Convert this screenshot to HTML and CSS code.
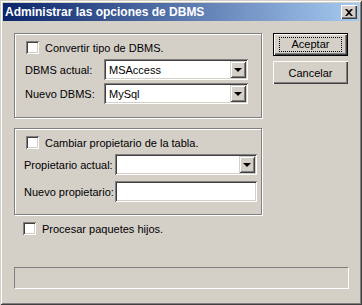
FILE: index.html
```html
<!DOCTYPE html>
<html lang="es">
<head>
<meta charset="UTF-8">
<title>Administrar las opciones de DBMS</title>
<link rel="stylesheet" href="styles.css">
</head>
<body>
<div class="window">
  <div class="titlebar">
    <span class="title">Administrar las opciones de DBMS</span>
    <span class="close"><svg width="8" height="7" viewBox="0 0 8 7"><path d="M0 0h2l2 2 2-2h2L5 3.5 8 7H6L4 5 2 7H0l3-3.5z" fill="#000"/></svg></span>
  </div>

  <div class="content">
    <div class="main">
      <div class="groups">
        <!-- DBMS -->
        <div class="group group-dbms">
          <label class="check"><span class="box"></span>Convertir tipo de DBMS.</label>
          <div class="field">
            <span class="label lbl-dbms">DBMS actual:</span>
            <div class="combo combo-dbms"><span class="value">MSAccess</span><span class="drop"></span></div>
          </div>
          <div class="field">
            <span class="label lbl-dbms">Nuevo DBMS:</span>
            <div class="combo combo-dbms"><span class="value">MySql</span><span class="drop"></span></div>
          </div>
        </div>

        <!-- Owner -->
        <div class="group group-owner">
          <label class="check"><span class="box"></span>Cambiar propietario de la tabla.</label>
          <div class="field">
            <span class="label lbl-owner">Propietario actual:</span>
            <div class="combo combo-owner"><span class="value"></span><span class="drop"></span></div>
          </div>
          <div class="field">
            <span class="label lbl-owner">Nuevo propietario:</span>
            <div class="edit"></div>
          </div>
        </div>

        <label class="check check-child"><span class="box"></span>Procesar paquetes hijos.</label>
      </div>

      <div class="buttons">
        <button type="button" class="btn default"><span class="focus">Aceptar</span></button>
        <button type="button" class="btn">Cancelar</button>
      </div>
    </div>

    <div class="status"></div>
  </div>
</div>
</body>
</html>
```

FILE: styles.css
```css
body {
  margin: 0;
  padding: 0;
  background: #d4d0c8;
  font-family: "Liberation Sans", Arial, sans-serif;
  font-size: 11px;
  color: #000;
}
.window {
  width: 362px;
  height: 305px;
  box-sizing: border-box;
  padding: 3px;
  background: #d4d0c8;
  box-shadow: inset 1px 1px 0 #d4d0c8, inset -1px -1px 0 #404040,
              inset 2px 2px 0 #fff, inset -2px -2px 0 #808080;
}
.titlebar {
  height: 18px;
  display: flex;
  align-items: center;
  justify-content: space-between;
  padding: 0 2px 0 2px;
  background: linear-gradient(to right, #0a246a, #a6caf0);
}
.title {
  color: #fff;
  font-weight: bold;
  font-size: 12px;
}
.close {
  width: 16px;
  height: 14px;
  box-sizing: border-box;
  display: flex;
  align-items: center;
  justify-content: center;
  background: #d4d0c8;
  box-shadow: inset 1px 1px 0 #fff, inset -1px -1px 0 #404040,
              inset -2px -2px 0 #808080;
}
.content {
  padding: 12px 0 0 11px;
}
.main {
  display: flex;
  gap: 11px;
}
.groups {
  width: 248px;
}
.group {
  box-sizing: border-box;
  border: 1px solid #808080;
  box-shadow: inset 1px 1px 0 #fff, 1px 1px 0 #fff;
  padding: 7px 0 0 11px;
}
.group-dbms {
  height: 85px;
}
.group-owner {
  height: 87px;
  margin-top: 10px;
}
.check {
  display: flex;
  align-items: center;
  height: 13px;
}
.box {
  width: 13px;
  height: 13px;
  box-sizing: border-box;
  margin-right: 6px;
  background: #fff;
  box-shadow: inset 1px 1px 0 #808080, inset -1px -1px 0 #fff,
              inset 2px 2px 0 #404040, inset -2px -2px 0 #d4d0c8;
}
.field {
  display: flex;
  align-items: center;
  margin-top: 3px;
}
.group .check {
  margin-bottom: 5px;
}
.group-owner .field + .field {
  margin-top: 6px;
}
.label {
  margin-left: -1px;
}
.lbl-dbms {
  width: 79px;
}
.lbl-owner {
  width: 91px;
  margin-left: -2px;
}
.combo, .edit {
  height: 21px;
  box-sizing: border-box;
  background: #fff;
  display: flex;
  align-items: center;
  justify-content: space-between;
  padding: 2px;
  box-shadow: inset 1px 1px 0 #808080, inset -1px -1px 0 #fff,
              inset 2px 2px 0 #404040, inset -2px -2px 0 #d4d0c8;
}
.combo-dbms {
  width: 144px;
}
.combo-owner, .edit {
  width: 142px;
}
.value {
  padding-left: 3px;
}
.drop {
  width: 16px;
  height: 17px;
  box-sizing: border-box;
  background: #d4d0c8;
  display: flex;
  align-items: center;
  justify-content: center;
  box-shadow: inset 1px 1px 0 #d4d0c8, inset -1px -1px 0 #404040,
              inset 2px 2px 0 #fff, inset -2px -2px 0 #808080;
}
.drop::after {
  content: "";
  border-left: 4px solid transparent;
  border-right: 4px solid transparent;
  border-top: 4px solid #000;
  margin-top: 1px;
}
.check-child {
  margin: 7px 0 0 9px;
}
.buttons {
  display: flex;
  flex-direction: column;
  gap: 5px;
}
.btn {
  width: 75px;
  height: 23px;
  box-sizing: border-box;
  border: none;
  padding: 0;
  background: #d4d0c8;
  font-family: "Liberation Sans", Arial, sans-serif;
  font-size: 11px;
  color: #000;
  box-shadow: inset 1px 1px 0 #fff, inset -1px -1px 0 #404040,
              inset -2px -2px 0 #808080;
}
.btn.default {
  border: 1px solid #000;
  display: flex;
  align-items: center;
  justify-content: center;
}
.focus {
  display: block;
  width: 63px;
  height: 15px;
  line-height: 13px;
  box-sizing: border-box;
  border: 1px dotted #000;
}
.status {
  width: 335px;
  height: 22px;
  box-sizing: border-box;
  margin-top: 32px;
  border-top: 1px solid #808080;
  border-left: 1px solid #808080;
  border-bottom: 1px solid #fff;
  border-right: 1px solid #fff;
}
```
